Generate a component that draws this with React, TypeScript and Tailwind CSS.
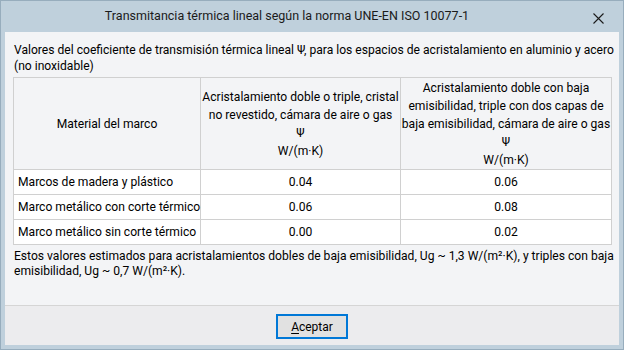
import React from 'react';

const rows = [
    { material: 'Marcos de madera y plástico', a: '0.04', b: '0.06' },
    { material: 'Marco metálico con corte térmico', a: '0.06', b: '0.08' },
    { material: 'Marco metálico sin corte térmico', a: '0.00', b: '0.02' },
];

const App = () => {
    return (
        <div
            className="w-[624px] h-[350px] flex flex-col bg-[#bfd0dc] border border-[#97adbd] text-black text-[12.1px]"
            style={{ fontFamily: 'Roboto, "Noto Sans", sans-serif' }}
        >
            {/* title bar */}
            <div className="h-[31px] shrink-0 relative flex items-center justify-center pr-[50px]">
                <span className="text-[12.5px] text-[#1a1a1a]">Transmitancia térmica lineal según la norma UNE-EN ISO 10077-1</span>
                <svg
                    className="absolute right-[19px] top-[12px]"
                    width="11"
                    height="11"
                    viewBox="0 0 11 11"
                    fill="none"
                    stroke="#1a1a1a"
                    strokeWidth="1.1"
                >
                    <path d="M0.5 0.5 L10.5 10.5 M10.5 0.5 L0.5 10.5" />
                </svg>
            </div>

            <div className="h-[313px] mx-[4px] flex flex-col bg-[#f3f4f6]">
                <div className="flex-1 px-[8px] pt-[10px] whitespace-nowrap">
                    <p className="leading-[16px] pl-[1px]">
                        Valores del coeficiente de transmisión térmica lineal Ψ, para los espacios de acristalamiento en aluminio y acero
                        <br />
                        (no inoxidable)
                    </p>

                    <table className="mt-[3px] w-[598px] border-collapse table-fixed">
                        <colgroup>
                            <col className="w-[187px]" />
                            <col className="w-[200px]" />
                            <col className="w-[211px]" />
                        </colgroup>
                        <thead>
                            <tr className="h-[92px]">
                                <th className="border border-[#d0d0d0] font-normal text-center align-middle leading-[18px]">
                                    Material del marco
                                </th>
                                <th className="border border-[#d0d0d0] font-normal text-center align-middle leading-[18px]">
                                    Acristalamiento doble o triple, cristal
                                    <br />
                                    no revestido, cámara de aire o gas
                                    <br />
                                    Ψ
                                    <br />
                                    W/(m·K)
                                </th>
                                <th className="border border-[#d0d0d0] font-normal text-center align-middle leading-[18px]">
                                    Acristalamiento doble con baja
                                    <br />
                                    emisibilidad, triple con dos capas de
                                    <br />
                                    baja emisibilidad, cámara de aire o gas
                                    <br />
                                    Ψ
                                    <br />
                                    W/(m·K)
                                </th>
                            </tr>
                        </thead>
                        <tbody className="bg-white">
                            {rows.map((row) => (
                                <tr key={row.material} className="h-[25px]">
                                    <td className="border border-[#d0d0d0] pl-[4px] p-0">{row.material}</td>
                                    <td className="border border-[#d0d0d0] text-center p-0">{row.a}</td>
                                    <td className="border border-[#d0d0d0] text-center p-0">{row.b}</td>
                                </tr>
                            ))}
                        </tbody>
                    </table>

                    <p className="mt-[4px] leading-[15px] pl-[1px]">
                        Estos valores estimados para acristalamientos dobles de baja emisibilidad, Ug ~ 1,3 W/(m²·K), y triples con baja
                        <br />
                        emisibilidad, Ug ~ 0,7 W/(m²·K).
                    </p>
                </div>

                {/* footer */}
                <div className="h-[40px] shrink-0 border-t border-[#d5d5d5] bg-[#ececee] flex justify-center pt-[8px]">
                    <button className="w-[72px] h-[25px] bg-[#e1e1e1] border-2 border-[#0078d7] text-[12px]">
                        <span className="underline underline-offset-2">A</span>ceptar
                    </button>
                </div>
            </div>
        </div>
    );
};

export default App;
